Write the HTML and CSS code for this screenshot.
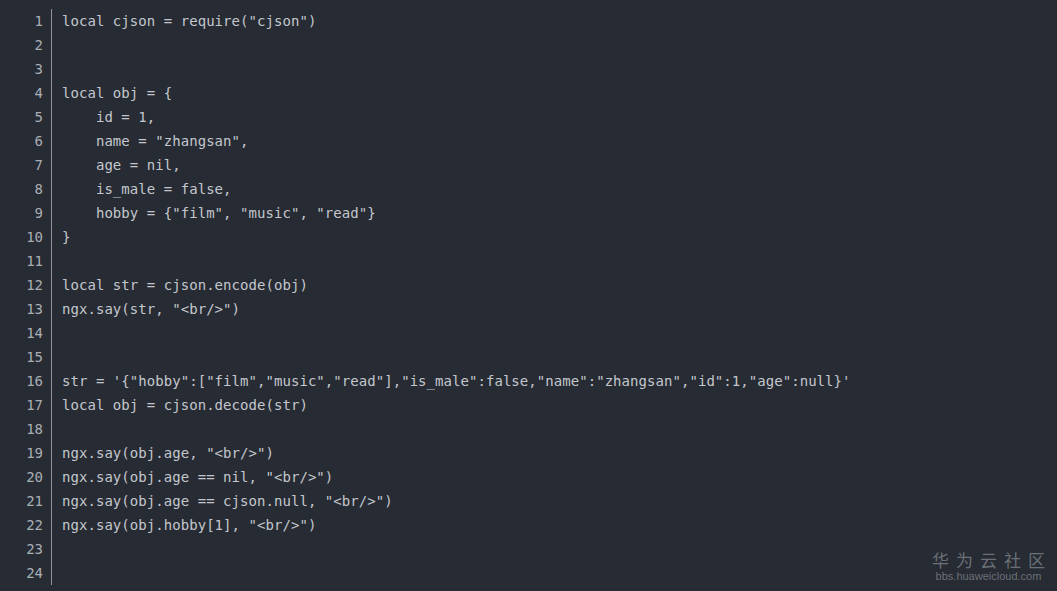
FILE: index.html
```html
<!DOCTYPE html>
<html lang="zh">
<head>
<meta charset="utf-8">
<title>cjson</title>
<link rel="stylesheet" href="styles.css">
</head>
<body>
<div class="editor">
  <div class="gutter">
    <div>1</div><div>2</div><div>3</div><div>4</div><div>5</div><div>6</div><div>7</div><div>8</div>
    <div>9</div><div>10</div><div>11</div><div>12</div><div>13</div><div>14</div><div>15</div><div>16</div>
    <div>17</div><div>18</div><div>19</div><div>20</div><div>21</div><div>22</div><div>23</div><div>24</div>
  </div>
<pre class="code">local cjson = require("cjson")


local obj = {
    id = 1,
    name = "zhangsan",
    age = nil,
    is_male = false,
    hobby = {"film", "music", "read"}
}

local str = cjson.encode(obj)
ngx.say(str, "&lt;br/&gt;")


str = '{"hobby":["film","music","read"],"is_male":false,"name":"zhangsan","id":1,"age":null}'
local obj = cjson.decode(str)

ngx.say(obj.age, "&lt;br/&gt;")
ngx.say(obj.age == nil, "&lt;br/&gt;")
ngx.say(obj.age == cjson.null, "&lt;br/&gt;")
ngx.say(obj.hobby[1], "&lt;br/&gt;")

 </pre>
</div>
<div class="watermark">
  <div class="wm-title">华为云社区</div>
  <div class="wm-url">bbs.huaweicloud.com</div>
</div>
</body>
</html>
```
FILE: styles.css
```css
html, body {
  margin: 0;
  padding: 0;
  background: #272b33;
  height: 100%;
  overflow: hidden;
}
.editor {
  display: flex;
  padding-top: 9px;
  font-family: "DejaVu Sans Mono", "Liberation Mono", monospace;
  font-size: 14px;
  line-height: 24px;
}
.gutter {
  width: 43px;
  padding-right: 8px;
  border-right: 1px solid #8f949b;
  text-align: right;
  color: #a9aeb5;
}
.code {
  margin: 0;
  padding-left: 10px;
  font: inherit;
  letter-spacing: 0.05px;
  color: #c3c7cd;
  white-space: pre;
}
.watermark {
  position: absolute;
  right: 12px;
  bottom: 8px;
  color: #6b6f76;
  text-align: center;
  font-family: "Noto Sans CJK SC", "Noto Sans", sans-serif;
}
.wm-title {
  font-size: 17px;
  line-height: 20px;
  letter-spacing: 7px;
  margin-right: -7px;
}
.wm-url {
  font-family: "Liberation Sans", sans-serif;
  font-size: 11px;
  line-height: 13px;
}
```
